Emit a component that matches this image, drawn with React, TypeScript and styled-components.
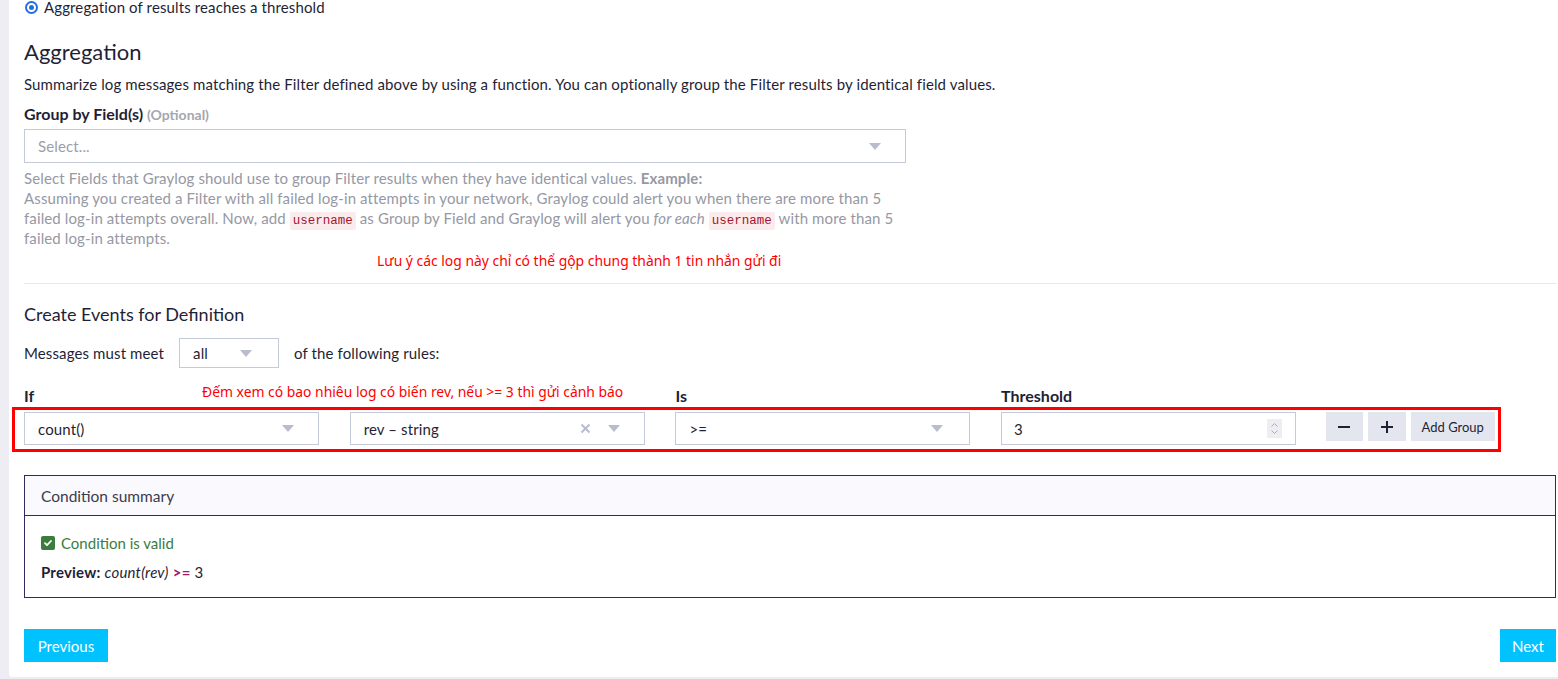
import React from "react";
import styled, { createGlobalStyle } from "styled-components";

const Global = createGlobalStyle`
  html, body { margin: 0; padding: 0; background: #eeedf4; overflow: hidden; }
  body { font-family: "Lato", "Liberation Sans", sans-serif; color: #1f1f36; letter-spacing: 0.12px; }
  * { box-sizing: border-box; }
`;

const Page = styled.div`
  padding-left: 9px;
  width: 1600px;
`;

const Card = styled.div`
  background: #ffffff;
  width: 1562px;
  padding: 0 15px 15px 15px;
  border-radius: 0 0 4px 4px;
`;

const RadioRow = styled.div`
  display: flex;
  align-items: center;
  height: 14px;
  font-size: 15px;
  gap: 6px;
  padding-left: 1px;
`;

const RadioDot = styled.span`
  width: 13px;
  height: 13px;
  border-radius: 50%;
  border: 2px solid #1f6fe0;
  display: inline-flex;
  align-items: center;
  justify-content: center;
  &::after {
    content: "";
    width: 5px;
    height: 5px;
    border-radius: 50%;
    background: #1f6fe0;
  }
`;

const H2 = styled.h2`
  margin: 25px 0 0;
  font-size: 22px;
  line-height: 26px;
  font-weight: 400;
  letter-spacing: 0;
`;

const Para = styled.p`
  margin: 9px 0 0;
  font-size: 15px;
  line-height: 20px;
`;

const Label = styled.div`
  margin-top: 10px;
  font-size: 16px;
  line-height: 20px;
  font-weight: 700;
  letter-spacing: 0;
`;

const Optional = styled.span`
  color: #a4a6b0;
  font-size: 14px;
  font-weight: 700;
`;

const SelectBox = styled.div<{ $w?: number; $h?: number; $mt?: number }>`
  width: ${(p) => (p.$w ? `${p.$w}px` : "100%")};
  height: ${(p) => p.$h ?? 34}px;
  margin-top: ${(p) => p.$mt ?? 0}px;
  border: 1px solid #c5cadb;
  background: #fff;
  display: flex;
  align-items: center;
  padding: 0 13px;
  font-size: 15px;
  color: #1f1f36;
`;

const Placeholder = styled.span`
  color: #9c9eaa;
  flex: 1;
`;

const Value = styled.span`
  flex: 1;
`;

const Caret = styled.span<{ $mr?: number }>`
  width: 0;
  height: 0;
  border-left: 6px solid transparent;
  border-right: 6px solid transparent;
  border-top: 7px solid #b8bccd;
  margin-right: ${(p) => p.$mr ?? 11}px;
`;

const Clear = styled.span`
  display: flex;
  margin-right: 17px;
`;

const Help = styled.div`
  width: 882px;
  margin-top: 5px;
  font-size: 15px;
  line-height: 20px;
  color: #9698a4;
`;

const Code = styled.code`
  font-family: "Liberation Mono", "DejaVu Sans Mono", monospace;
  font-size: 12.5px;
  line-height: 1;
  letter-spacing: 0;
  color: #a3162e;
  background: #fcebed;
  padding: 2px 3px;
  border-radius: 2px;
`;

const NoteRow = styled.div`
  margin-top: 4px;
  padding-left: 353px;
  height: 16px;
  line-height: 16px;
`;

const Note = styled.span`
  font-family: "Noto Sans", "Liberation Sans", sans-serif;
  font-size: 13.9px;
  letter-spacing: 0;
  color: #ff0000;
  white-space: nowrap;
`;

const Separator = styled.hr`
  margin: 15px 0 0;
  border: 0;
  border-top: 1px solid #e8e8ea;
`;

const H3 = styled.h3`
  margin: 19px 0 0;
  font-size: 18px;
  line-height: 22px;
  font-weight: 400;
  letter-spacing: 0;
`;

const MeetRow = styled.div`
  margin-top: 13px;
  display: flex;
  align-items: center;
  font-size: 15px;
  gap: 15px;
`;

const LabelRow = styled.div`
  position: relative;
  margin-top: 18px;
  display: grid;
  grid-template-columns: repeat(4, 295px);
  column-gap: 30.7px;
  font-size: 16px;
  line-height: 20px;
  font-weight: 700;
  letter-spacing: 0;
`;

const LabelNote = styled.span`
  position: absolute;
  left: 178px;
  top: -4px;
  font-family: "Noto Sans", "Liberation Sans", sans-serif;
  font-size: 13.9px;
  font-weight: 400;
  color: #ff0000;
  white-space: nowrap;
`;

const RulesRow = styled.div`
  position: relative;
  margin-top: 6px;
  display: grid;
  grid-template-columns: repeat(4, 295px) auto;
  column-gap: 30.7px;
  align-items: start;
`;

const Highlight = styled.div`
  position: absolute;
  left: -12px;
  top: -5px;
  width: 1489px;
  height: 45px;
  border: 3px solid #ff0000;
  pointer-events: none;
`;

const NumberInput = styled.div`
  height: 33px;
  border: 1px solid #c5cadb;
  display: flex;
  align-items: center;
  padding: 0 13px 0 12px;
  font-size: 15px;
`;

const Spinner = styled.span`
  width: 15px;
  height: 19px;
  background: #eeeef2;
  display: flex;
  align-items: center;
  justify-content: center;
`;

const BtnGroup = styled.div`
  display: flex;
  gap: 5px;
  margin-left: -1px;
`;

const GrayBtn = styled.button<{ $w: number }>`
  width: ${(p) => p.$w}px;
  height: 29px;
  border: 0;
  background: #e4e6ef;
  color: #1f1f36;
  font-family: "Lato", "Liberation Sans", sans-serif;
  font-size: 13px;
  display: flex;
  align-items: center;
  justify-content: center;
  padding: 0;
`;

const Panel = styled.div`
  margin-top: 30px;
  border: 1px solid #302b5e;
`;

const PanelHead = styled.div`
  height: 40px;
  background: #f9f9fe;
  border-bottom: 1px solid #302b5e;
  display: flex;
  align-items: center;
  padding-left: 16px;
  font-size: 15.5px;
  color: #3b3b4c;
  letter-spacing: 0;
`;

const PanelBody = styled.div`
  padding: 16px 16px 15px;
  font-size: 15px;
`;

const Valid = styled.div`
  display: flex;
  align-items: center;
  gap: 6px;
  color: #3b7d3b;
  font-size: 15px;
  line-height: 22px;
  letter-spacing: 0;
`;

const Preview = styled.div`
  margin-top: 8px;
  line-height: 20px;
  font-size: 15px;
  letter-spacing: 0.2px;
`;

const Op = styled.b`
  color: #a3166b;
`;

const Footer = styled.div`
  margin-top: 31px;
  display: flex;
  justify-content: space-between;
`;

const PrimaryBtn = styled.button<{ $w: number }>`
  width: ${(p) => p.$w}px;
  height: 33px;
  border: 0;
  background: #00c2ff;
  color: #ffffff;
  font-family: "Lato", "Liberation Sans", sans-serif;
  font-size: 15px;
  padding: 0;
`;

const CheckIcon = () => (
  <svg width="14" height="14" viewBox="0 0 14 14">
    <rect x="0" y="0" width="14" height="14" rx="2" fill="#3d7b3f" />
    <path d="M4 7.2 L6 9.2 L10 5" stroke="#fff" strokeWidth="1.8" fill="none" strokeLinecap="round" strokeLinejoin="round" />
  </svg>
);

const SpinIcon = () => (
  <svg width="9" height="15" viewBox="0 0 9 15">
    <path d="M1.5 5.5 L4.5 2.5 L7.5 5.5" stroke="#a9acbb" strokeWidth="1" fill="none" />
    <path d="M1.5 9.5 L4.5 12.5 L7.5 9.5" stroke="#a9acbb" strokeWidth="1" fill="none" />
  </svg>
);

const XIcon = () => (
  <svg width="11" height="11" viewBox="0 0 11 11">
    <path d="M1.5 1.5 L9.5 9.5 M9.5 1.5 L1.5 9.5" stroke="#b8bccd" strokeWidth="2" fill="none" />
  </svg>
);

export default function App() {
  return (
    <>
      <Global />
      <Page>
        <Card>
          <RadioRow>
            <RadioDot />
            <span>Aggregation of results reaches a threshold</span>
          </RadioRow>
          <H2>Aggregation</H2>
          <Para>
            Summarize log messages matching the Filter defined above by using a function. You can optionally group the
            Filter results by identical field values.
          </Para>
          <Label>
            Group by Field(s) <Optional>(Optional)</Optional>
          </Label>
          <SelectBox $w={882} $mt={4}>
            <Placeholder>Select...</Placeholder>
            <Caret />
          </SelectBox>
          <Help>
            Select Fields that Graylog should use to group Filter results when they have identical values.{" "}
            <b>Example:</b>
            <br />
            Assuming you created a Filter with all failed log-in attempts in your network, Graylog could alert you when
            there are more than 5 failed log-in attempts overall. Now, add <Code>username</Code> as Group by Field and
            Graylog will alert you <i>for each</i> <Code>username</Code> with more than 5 failed log-in attempts.
          </Help>
          <NoteRow>
            <Note>Lưu ý các log này chỉ có thể gộp chung thành 1 tin nhắn gửi đi</Note>
          </NoteRow>
          <Separator />
          <H3>Create Events for Definition</H3>
          <MeetRow>
            <span>Messages must meet</span>
            <SelectBox $w={100} $h={30}>
              <Value>all</Value>
              <Caret $mr={13} />
            </SelectBox>
            <span>of the following rules:</span>
          </MeetRow>
          <LabelRow>
            <span>If</span>
            <span />
            <span>Is</span>
            <span>Threshold</span>
            <LabelNote>Đếm xem có bao nhiêu log có biến rev, nếu &gt;= 3 thì gửi cảnh báo</LabelNote>
          </LabelRow>
          <RulesRow>
            <SelectBox $h={33}>
              <Value>count()</Value>
              <Caret />
            </SelectBox>
            <SelectBox $h={33}>
              <Value>rev – string</Value>
              <Clear>
                <XIcon />
              </Clear>
              <Caret />
            </SelectBox>
            <SelectBox $h={33}>
              <Value>&gt;=</Value>
              <Caret $mr={13} />
            </SelectBox>
            <NumberInput>
              <Value>3</Value>
              <Spinner>
                <SpinIcon />
              </Spinner>
            </NumberInput>
            <BtnGroup>
              <GrayBtn $w={37}>
                <svg width="12" height="2" viewBox="0 0 12 2">
                  <rect width="12" height="2" fill="#1f1f36" />
                </svg>
              </GrayBtn>
              <GrayBtn $w={38}>
                <svg width="12" height="12" viewBox="0 0 12 12">
                  <rect y="5" width="12" height="2" fill="#1f1f36" />
                  <rect x="5" width="2" height="12" fill="#1f1f36" />
                </svg>
              </GrayBtn>
              <GrayBtn $w={84}>Add Group</GrayBtn>
            </BtnGroup>
            <Highlight />
          </RulesRow>
          <Panel>
            <PanelHead>Condition summary</PanelHead>
            <PanelBody>
              <Valid>
                <CheckIcon />
                <span>Condition is valid</span>
              </Valid>
              <Preview>
                <b>Preview:</b> <i>count(rev)</i> <Op>&gt;=</Op> 3
              </Preview>
            </PanelBody>
          </Panel>
          <Footer>
            <PrimaryBtn $w={84}>Previous</PrimaryBtn>
            <PrimaryBtn $w={56}>Next</PrimaryBtn>
          </Footer>
        </Card>
      </Page>
    </>
  );
}
